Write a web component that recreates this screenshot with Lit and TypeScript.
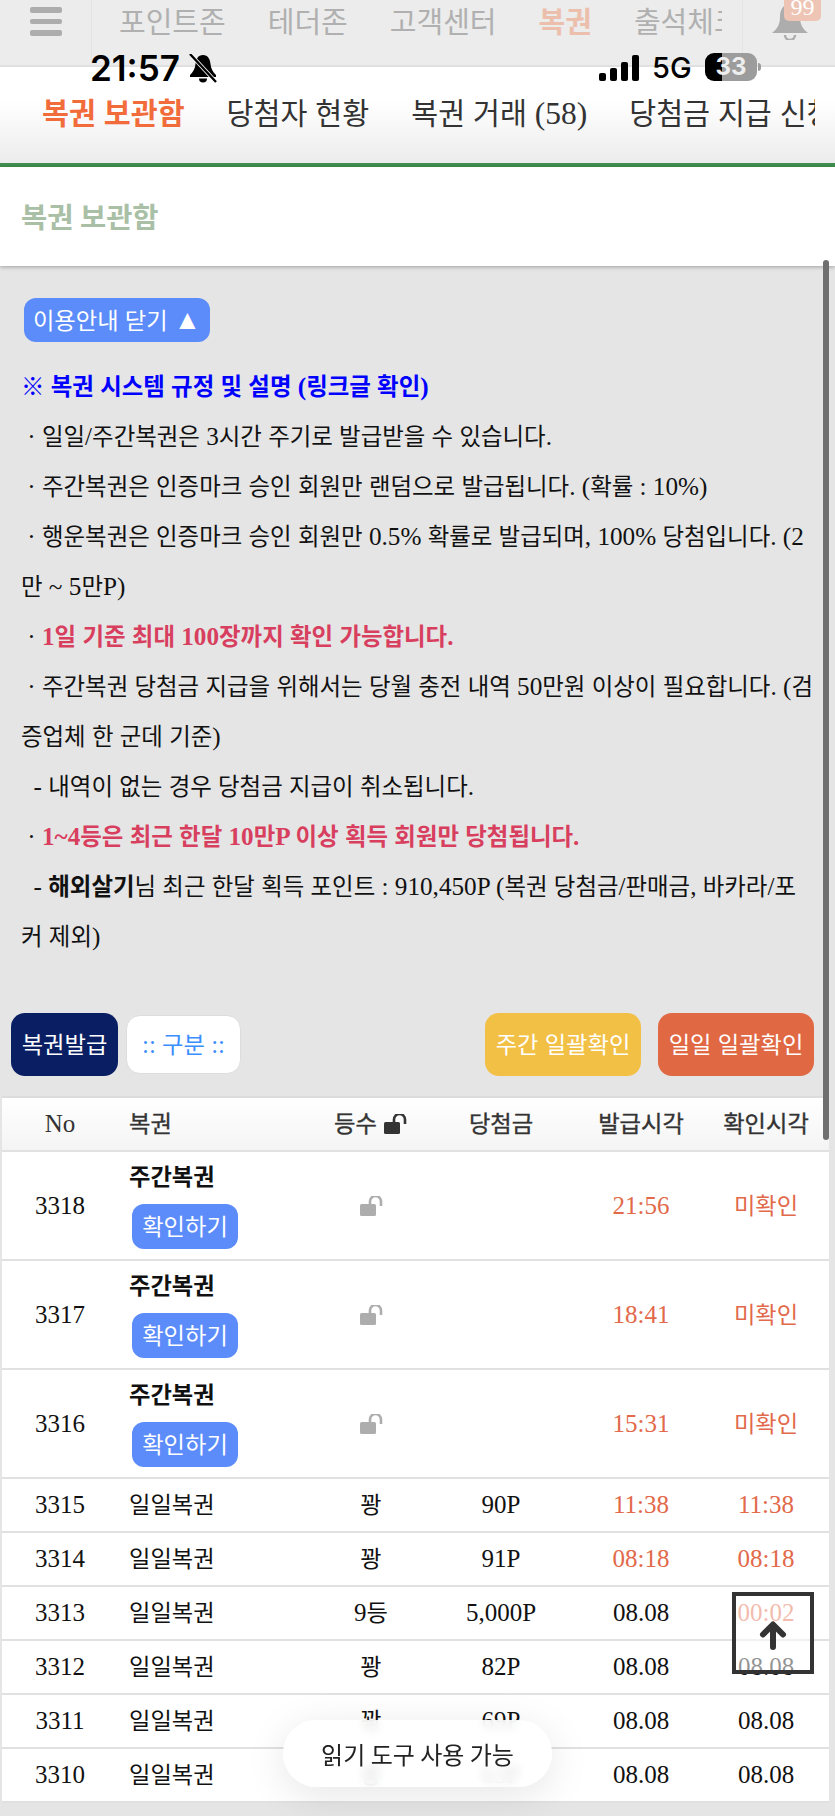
import { LitElement, html, css, svg } from "lit";
import { customElement } from "lit/decorators.js";

const t = (s: string) =>
  s.split(/([\uAC00-\uD7A3※]+)/).map((p, i) => (i % 2 ? html`<span class="k">${p}</span>` : p));

const lock = (cls: string) => html`<svg class=${cls} viewBox="0 0 24 20" aria-hidden="true">
  <rect x="0" y="8" width="16" height="12" rx="1.5" fill="currentColor"></rect>
  <path d="M10 9V5.5a5.5 5.5 0 0 1 11 0V10" fill="none" stroke="currentColor" stroke-width="2.6"></path>
</svg>`;

const weekly = [
  ["3318", "21:56"],
  ["3317", "18:41"],
  ["3316", "15:31"],
];

const daily = [
  ["3315", "꽝", "90P", "11:38", "11:38", true, true],
  ["3314", "꽝", "91P", "08:18", "08:18", true, true],
  ["3313", "9등", "5,000P", "08.08", "00:02", false, true],
  ["3312", "꽝", "82P", "08.08", "08.08", false, false],
  ["3311", "꽝", "69P", "08.08", "08.08", false, false],
  ["3310", "꽝", "63P", "08.08", "08.08", false, false],
] as const;

@customElement("app-root")
export class AppRoot extends LitElement {
  static styles = css`
    :host {
      display: block;
      position: relative;
      width: 835px;
      height: 1816px;
      overflow: hidden;
      background: #e5e5e5;
      font-family: "Liberation Serif", "Noto Sans CJK KR", serif;
      font-size: 25px;
      color: #111;
    }
    .k { font-size: 0.93em; line-height: 1; }

    .topnav {
      display: flex;
      height: 67px;
      box-sizing: border-box;
      background: #ececec;
      border-bottom: 2px solid #e0e0e0;
      font-family: "Noto Sans CJK KR", sans-serif;
      font-size: 29px;
      color: #b0b0b0;
      line-height: 40px;
    }
    .burger {
      width: 92px;
      flex: none;
      box-sizing: border-box;
      padding: 7px 0 0 30px;
      border-right: 1px solid #e4e4e4;
      display: flex;
      flex-direction: column;
      gap: 6px;
    }
    .burger i { display: block; width: 32px; height: 5.5px; border-radius: 2px; background: #adadad; }
    .menu {
      width: 630px;
      flex: none;
      overflow: hidden;
      display: flex;
      gap: 42px;
      padding: 0 0 0 27px;
      box-sizing: border-box;
      white-space: nowrap;
    }
    .menu .on { color: #ecbfac; font-weight: 700; }
    .bellcell {
      flex: 1;
      position: relative;
      border-left: 1px solid #e4e4e4;
      margin-left: 20px;
    }
    .bell { position: absolute; left: 29px; top: 4px; width: 36px; height: 36px; color: #adadad; }
    .badge {
      position: absolute;
      left: 41px;
      top: 0;
      width: 37px;
      height: 21px;
      background: #eec5b5;
      border-radius: 0 0 5px 5px;
      color: #fff;
      font-family: "Liberation Serif", serif;
      font-size: 24px;
      line-height: 14px;
      text-align: center;
      overflow: hidden;
    }

    .status {
      position: absolute;
      left: 0;
      top: 50px;
      width: 835px;
      height: 36px;
      font-family: Inter, "Liberation Sans", sans-serif;
      color: #000;
    }
    .time {
      position: absolute;
      left: 90px;
      top: 0;
      font-size: 35px;
      font-weight: 600;
      line-height: 36px;
    }
    .mute { position: absolute; left: 188px; top: 4px; width: 30px; height: 29px; }
    .signal { position: absolute; left: 599px; top: 5px; width: 40px; height: 26px; }
    .fiveg { position: absolute; left: 652px; top: 0; font-size: 29px; line-height: 36px; font-weight: 500; }
    .batt {
      position: absolute;
      left: 705px;
      top: 3px;
      width: 52px;
      height: 28px;
      border-radius: 9px;
      background: linear-gradient(90deg, #000 33%, #9c9c9c 33%);
      color: #eee;
      font-size: 24px;
      font-weight: 700;
      line-height: 28px;
      text-align: center;
    }
    .nub {
      position: absolute;
      left: 758px;
      top: 13px;
      width: 3px;
      height: 8px;
      border-radius: 0 3px 3px 0;
      background: #9c9c9c;
    }

    .subnav {
      height: 100px;
      box-sizing: border-box;
      background: linear-gradient(#ffffff 35%, #ececec);
      border-bottom: 4px solid #3f8f4f;
      padding: 27px 20px 0 42px;
      font-size: 31.5px;
      line-height: 40px;
      color: #333;
    }
    .subnav-in { display: flex; gap: 42px; overflow: hidden; white-space: nowrap; }
    .subnav .on { color: #f26b3a; font-weight: 700; }

    .title {
      height: 99px;
      box-sizing: border-box;
      background: #fff;
      padding: 0 0 3px 21px;
      display: flex;
      align-items: center;
      font-family: "Noto Sans CJK KR", sans-serif;
      font-size: 28.5px;
      font-weight: 700;
      color: #a9c0a6;
      box-shadow: 0 1px 4px rgba(0, 0, 0, 0.3);
      position: relative;
    }

    .main { padding: 32px 0 0; }
    .toggle {
      margin-left: 24px;
      width: 186px;
      height: 44px;
      border-radius: 12px;
      background: #5b8cfa;
      color: #fff;
      display: flex;
      align-items: center;
      justify-content: center;
      white-space: nowrap;
    }
    .tri { font-size: 1.1em; }
    .rules { margin-top: 20px; padding: 0 20px 0 21px; font-size: 25.2px; line-height: 50px; color: #111; }
    .rules p { margin: 0; }
    .blue { color: #0000ff; font-weight: 700; }
    .red { color: #d83f5f; font-weight: 700; }
    .rules b { font-weight: 700; }

    .actions {
      margin-top: 51px;
      padding: 0 21px 0 11px;
      display: flex;
      align-items: center;
      gap: 8px;
      color: #fff;
    }
    .act {
      height: 63px;
      border-radius: 14px;
      display: flex;
      align-items: center;
      justify-content: center;
      flex: none;
      white-space: nowrap;
    }
    .navy { width: 107px; background: #0a1f63; }
    .sel {
      width: 115px;
      height: 59px;
      background: #fff;
      color: #3b8eff;
      border: 1px solid #ddd;
      box-sizing: border-box;
    }
    .yellow { width: 156px; background: #f2c045; margin-left: auto; }
    .orange { width: 156px; background: #e06843; margin-left: 9px; }

    .table {
      margin: 20px 6px 0 2px;
      background: #fff;
      border-top: 2px solid #dcdcdc;
      font-size: 25px;
    }
    .row {
      display: grid;
      grid-template-columns: 116px 191px 124px 136px 144px 106px;
      padding-right: 10px;
      align-items: center;
      text-align: center;
      border-bottom: 2px solid #e1e1e1;
      box-sizing: border-box;
      height: 54px;
    }
    .row.head {
      height: 54px;
      background: linear-gradient(#fff, #f4f4f4);
      color: #333;
    }
    .row.head .k { -webkit-text-stroke: 0.35px #333; }
    .row.tall { height: 109px; }
    .name { text-align: left; padding-left: 11px; }
    .name.stack { align-self: start; display: flex; flex-direction: column; align-items: flex-start; gap: 5px; }
    .name b { font-weight: 700; line-height: 44px; margin-top: 3px; }
    .check {
      margin-left: 3px;
      width: 106px;
      height: 45px;
      border-radius: 12px;
      background: #5b8cfa;
      color: #fff;
      display: flex;
      align-items: center;
      justify-content: center;
    }
    .hot { color: #e2694a; }
    .lk { display: block; margin: 0 auto; width: 24px; height: 20px; color: #adadad; transform: translateX(1px); }
    .lk-head { width: 24px; height: 20px; color: #333; margin-left: 7px; vertical-align: -2px; }

    .scrollbar {
      position: absolute;
      left: 823px;
      top: 260px;
      width: 6px;
      height: 880px;
      border-radius: 3px;
      background: #6f6f6f;
    }
    .totop {
      position: absolute;
      left: 732px;
      top: 1592px;
      width: 82px;
      height: 82px;
      box-sizing: border-box;
      border: 4px solid #333;
      background: rgba(255, 255, 255, 0.55);
      display: flex;
      justify-content: center;
    }
    .totop svg { width: 30px; height: 30px; margin-top: 24px; }
    .toast {
      position: absolute;
      left: 283px;
      top: 1720px;
      width: 269px;
      height: 67px;
      border-radius: 34px;
      background: rgba(255, 255, 255, 0.88);
      backdrop-filter: blur(5px);
      box-shadow: 0 8px 40px rgba(0, 0, 0, 0.1);
      font-family: "Noto Sans CJK KR", sans-serif;
      font-size: 24px;
      color: #222;
      display: flex;
      align-items: center;
      justify-content: center;
    }
  `;

  render() {
    return html`
      <div class="topnav">
        <div class="burger"><i></i><i></i><i></i></div>
        <div class="menu">
          <span>포인트존</span><span>테더존</span><span>고객센터</span><span class="on">복권</span><span>출석체크</span>
        </div>
        <div class="bellcell">
          <svg class="bell" viewBox="0 0 36 36" aria-hidden="true">
            <path fill="currentColor" d="M18 0c7 0 10 6 10 13 0 8 3 12 8 16H0c5-4 8-8 8-16C8 6 11 0 18 0z"></path>
            <path fill="none" stroke="currentColor" stroke-width="2.5" d="M13 31a5 5 0 0 0 10 0"></path>
          </svg>
          <div class="badge">99</div>
        </div>
      </div>

      <div class="subnav">
        <div class="subnav-in">
          <span class="on">${t("복권 보관함")}</span>
          <span>${t("당첨자 현황")}</span>
          <span>${t("복권 거래 (58)")}</span>
          <span>${t("당첨금 지급 신청")}</span>
        </div>
      </div>

      <div class="title">복권 보관함</div>

      <div class="main">
        <div class="toggle"><span>${t("이용안내 닫기 ")}<span class="tri">▲</span></span></div>
        <div class="rules">
          <p class="blue">${t("※ 복권 시스템 규정 및 설명 (링크글 확인)")}</p>
          <p>${t("\u00a0· 일일/주간복권은 3시간 주기로 발급받을 수 있습니다.")}</p>
          <p>${t("\u00a0· 주간복권은 인증마크 승인 회원만 랜덤으로 발급됩니다. (확률 : 10%)")}</p>
          <p>${t("\u00a0· 행운복권은 인증마크 승인 회원만 0.5% 확률로 발급되며, 100% 당첨입니다. (2만 ~ 5만P)")}</p>
          <p>\u00a0· <span class="red">${t("1일 기준 최대 100장까지 확인 가능합니다.")}</span></p>
          <p>${t("\u00a0· 주간복권 당첨금 지급을 위해서는 당월 충전 내역 50만원 이상이 필요합니다. (검증업체 한 군데 기준)")}</p>
          <p>${t("\u00a0\u00a0- 내역이 없는 경우 당첨금 지급이 취소됩니다.")}</p>
          <p>\u00a0· <span class="red">${t("1~4등은 최근 한달 10만P 이상 획득 회원만 당첨됩니다.")}</span></p>
          <p>\u00a0\u00a0- <b>${t("해외살기")}</b>${t("님 최근 한달 획득 포인트 : 910,450P (복권 당첨금/판매금, 바카라/포커 제외)")}</p>
        </div>

        <div class="actions">
          <div class="act navy"><span>${t("복권발급")}</span></div>
          <div class="act sel"><span>${t(":: 구분 ::")}</span></div>
          <div class="act yellow"><span>${t("주간 일괄확인")}</span></div>
          <div class="act orange"><span>${t("일일 일괄확인")}</span></div>
        </div>

        <div class="table">
          <div class="row head">
            <span>No</span>
            <span class="name">${t("복권")}</span>
            <span>${t("등수")}${lock("lk-head")}</span>
            <span>${t("당첨금")}</span>
            <span>${t("발급시각")}</span>
            <span>${t("확인시각")}</span>
          </div>
          ${weekly.map(
            ([no, time]) => html`<div class="row tall">
              <span>${no}</span>
              <div class="name stack">
                <b>${t("주간복권")}</b>
                <span class="check"><span>${t("확인하기")}</span></span>
              </div>
              <span>${lock("lk")}</span>
              <span></span>
              <span class="hot">${time}</span>
              <span class="hot">${t("미확인")}</span>
            </div>`
          )}
          ${daily.map(
            ([no, rank, prize, issued, checked, hotA, hotB]) => html`<div class="row">
              <span>${no}</span>
              <span class="name">${t("일일복권")}</span>
              <span>${t(rank)}</span>
              <span>${prize}</span>
              <span class=${hotA ? "hot" : ""}>${issued}</span>
              <span class=${hotB ? "hot" : ""}>${checked}</span>
            </div>`
          )}
        </div>
      </div>

      <div class="status">
        <span class="time">21:57</span>
        <svg class="mute" viewBox="0 0 30 29" aria-hidden="true">
          <path fill="#000" d="M15 1c5 0 7 4 7.500 9 .5 5 2.500 8 5.500 11v2H2v-2c3-3 5-6 5.500-11C8 5 10 1 15 1z"></path>
          <path fill="#000" d="M11 24.500h8a4 4 0 0 1-8 0z"></path>
          <path stroke="#fff" stroke-width="4" d="M3 1l25 27"></path>
          <path stroke="#000" stroke-width="2.400" d="M2 0l26 28"></path>
        </svg>
        <svg class="signal" viewBox="0 0 40 26" aria-hidden="true">
          ${[
            [0, 18, 8],
            [11, 13, 13],
            [22, 7, 19],
            [33, 0, 26],
          ].map(([x, y, h]) => svg`<rect x=${x} y=${y} width="7" height=${h} rx="2" fill="#000"></rect>`)}
        </svg>
        <span class="fiveg">5G</span>
        <span class="batt">33</span>
        <span class="nub"></span>
      </div>

      <div class="scrollbar"></div>

      <div class="totop">
        <svg viewBox="0 0 30 30" aria-hidden="true">
          <path d="M15 27V5M5 14.500 15 4.500l10 10" fill="none" stroke="#333" stroke-width="6" stroke-linecap="round" stroke-linejoin="round"></path>
        </svg>
      </div>

      <div class="toast">읽기 도구 사용 가능</div>
    `;
  }
}
